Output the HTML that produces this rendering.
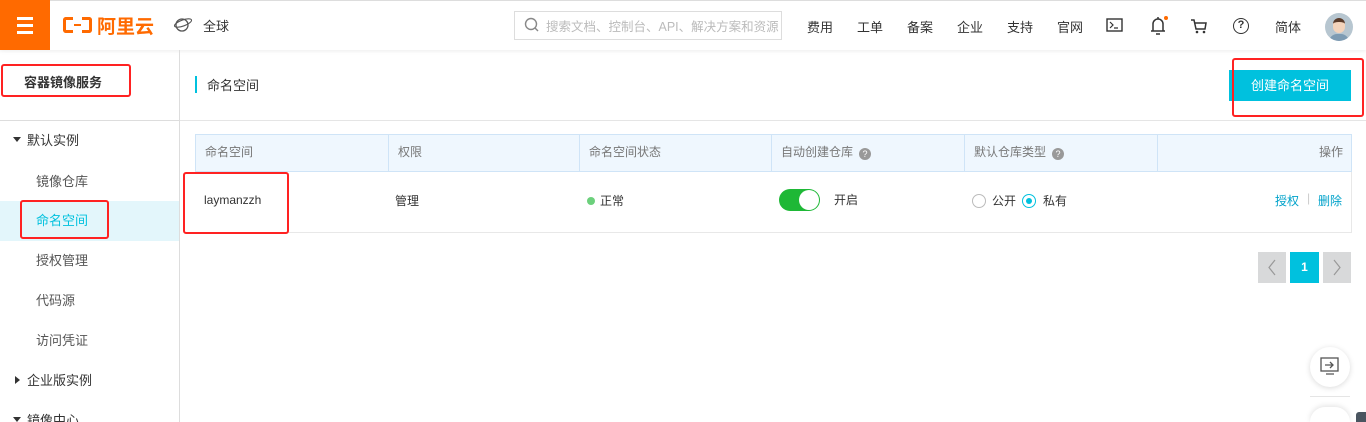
<!DOCTYPE html>
<html><head><meta charset="utf-8"><style>
*{box-sizing:border-box;margin:0;padding:0}
html{width:1366px;height:422px;overflow:hidden}
body{width:1366px;height:422px;overflow:hidden;background:#fff;font-family:"Liberation Sans","Noto Sans CJK SC",sans-serif;font-size:12px;color:#333;position:relative}
.abs{position:absolute}
.top{left:0;top:0;width:1366px;height:50px;background:#fff;box-shadow:0 1px 4px rgba(0,0,0,.08);border-top:1px solid #ddd}
.nav{top:17px;font-size:13px;color:#333}
.side{left:0;top:50px;width:180px;height:372px;border-right:1px solid #ddd}
.mi{left:36px;font-size:13px;color:#555}
.red{border:2px solid #f22;border-radius:3px}
.th{top:134px;height:38px;background:#eff7fe;border:1px solid #cfe4f7}
.cell{position:absolute;top:0;height:100%;border-right:1px solid #cfe4f7;padding-left:9px;line-height:35px;color:#777;font-size:12px}
.q{display:inline-block;width:12px;height:12px;border-radius:50%;background:#999;color:#fff;font-size:9px;line-height:12px;text-align:center;margin-left:6px;vertical-align:-1px}
</style></head><body>
<div class="abs top"></div>
<div class="abs" style="left:0;top:0;width:50px;height:50px;background:#ff6a00"></div>
<div class="abs" style="left:17px;top:17px;width:16px;height:3px;background:#fff"></div>
<div class="abs" style="left:17px;top:24px;width:16px;height:3px;background:#fff"></div>
<div class="abs" style="left:17px;top:31px;width:16px;height:3px;background:#fff"></div>
<div class="abs" style="left:63px;top:17px;width:10px;height:16px;border:3px solid #ff6a00;border-right:none;border-radius:3px 0 0 3px"></div>
<div class="abs" style="left:82px;top:17px;width:10px;height:16px;border:3px solid #ff6a00;border-left:none;border-radius:0 3px 3px 0"></div>
<div class="abs" style="left:74px;top:24px;width:7px;height:2px;background:#ff6a00"></div>
<div class="abs" style="left:97px;top:12px;font-size:19px;font-weight:bold;color:#ff6a00">阿里云</div>
<svg class="abs" style="left:173px;top:16px" width="20" height="18" viewBox="0 0 20 18"><circle cx="9" cy="9" r="6" fill="none" stroke="#555" stroke-width="1.3"/><ellipse cx="10" cy="7" rx="9" ry="3" fill="none" stroke="#555" stroke-width="1.1" transform="rotate(-20 10 7)"/></svg>
<div class="abs nav" style="left:203px;top:16px">全球</div>
<div class="abs" style="left:514px;top:11px;width:268px;height:29px;border:1px solid #ddd"></div>
<svg class="abs" style="left:524px;top:17px" width="16" height="16"><circle cx="7" cy="7" r="5.5" fill="none" stroke="#888" stroke-width="1.4"/><line x1="11" y1="11" x2="14" y2="14" stroke="#888" stroke-width="1.4"/></svg>
<div class="abs" style="left:546px;top:16px;font-size:12.5px;color:#bbb;white-space:nowrap">搜索文档、控制台、API、解决方案和资源</div>
<div class="abs nav" style="left:807px">费用</div>
<div class="abs nav" style="left:857px">工单</div>
<div class="abs nav" style="left:907px">备案</div>
<div class="abs nav" style="left:957px">企业</div>
<div class="abs nav" style="left:1007px">支持</div>
<div class="abs nav" style="left:1057px">官网</div>
<svg class="abs" style="left:1106px;top:18px" width="18" height="15"><rect x="1" y="1" width="15" height="12" fill="none" stroke="#333" stroke-width="1.4"/><path d="M4 4l3 3-3 3M8 10h4" fill="none" stroke="#333" stroke-width="1.2"/></svg>
<svg class="abs" style="left:1149px;top:14px" width="20" height="22"><path d="M4 17V10a5 5 0 0 1 10 0v7M2 17h14M7 20h4M9 3v2" fill="none" stroke="#333" stroke-width="1.5"/><circle cx="17" cy="4" r="2" fill="#ff6a00"/></svg>
<svg class="abs" style="left:1190px;top:18px" width="18" height="16"><path d="M1 2h3l2 9h9l1-6H5" fill="none" stroke="#333" stroke-width="1.5"/><circle cx="7" cy="14" r="1.3" fill="#333"/><circle cx="14" cy="14" r="1.3" fill="#333"/></svg>
<div class="abs" style="left:1233px;top:18px;width:16px;height:16px;border:1.6px solid #333;border-radius:50%;text-align:center;font-size:11px;font-weight:bold;line-height:13px">?</div>
<div class="abs nav" style="left:1275px">简体</div>
<div class="abs" style="left:1325px;top:13px;width:28px;height:28px;border-radius:50%;background:#b7c6d0;overflow:hidden"><div class="abs" style="left:8px;top:5px;width:12px;height:15px;border-radius:6px;background:#f3d3bb;border-top:4px solid #5a3b2a"></div><div class="abs" style="left:4px;top:21px;width:20px;height:10px;border-radius:8px 8px 0 0;background:#7d9bb3"></div></div>

<div class="abs side"></div>
<div class="abs" style="left:0;top:120px;width:180px;height:1px;background:#ddd"></div>
<div class="abs" style="left:24px;top:72px;font-size:13px;font-weight:bold;color:#333">容器镜像服务</div>
<div class="abs red" style="left:1px;top:64px;width:130px;height:33px"></div>
<div class="abs" style="left:13px;top:137px;border:4px solid transparent;border-top:5px solid #333"></div>
<div class="abs" style="left:27px;top:130px;font-size:13px;color:#333">默认实例</div>
<div class="abs mi" style="top:171px">镜像仓库</div>
<div class="abs" style="left:0;top:201px;width:179px;height:40px;background:#e3f6fb"></div>
<div class="abs mi" style="top:210px;color:#00c1de">命名空间</div>
<div class="abs red" style="left:20px;top:200px;width:89px;height:39px"></div>
<div class="abs mi" style="top:250px">授权管理</div>
<div class="abs mi" style="top:290px">代码源</div>
<div class="abs mi" style="top:330px">访问凭证</div>
<div class="abs" style="left:15px;top:376px;border:4px solid transparent;border-left:5px solid #333"></div>
<div class="abs" style="left:27px;top:370px;font-size:13px;color:#333">企业版实例</div>
<div class="abs" style="left:13px;top:417px;border:4px solid transparent;border-top:5px solid #333"></div>
<div class="abs" style="left:27px;top:410px;font-size:13px;color:#333">镜像中心</div>

<div class="abs" style="left:180px;top:120px;width:1186px;height:1px;background:#e5e5e5"></div>
<div class="abs" style="left:195px;top:76px;width:2px;height:17px;background:#00c1de"></div>
<div class="abs" style="left:207px;top:75px;font-size:13px;color:#333">命名空间</div>
<div class="abs" style="left:1229px;top:70px;width:122px;height:31px;background:#00c1de;color:#fff;font-size:13px;text-align:center;line-height:31px">创建命名空间</div>
<div class="abs red" style="left:1232px;top:58px;width:132px;height:59px"></div>

<div class="abs th" style="left:195px;width:1157px">
<div class="cell" style="left:0;width:193px">命名空间</div>
<div class="cell" style="left:193px;width:191px">权限</div>
<div class="cell" style="left:384px;width:192px">命名空间状态</div>
<div class="cell" style="left:576px;width:193px">自动创建仓库<span class="q">?</span></div>
<div class="cell" style="left:769px;width:193px">默认仓库类型<span class="q">?</span></div>
<div class="cell" style="left:962px;width:193px;border:none;text-align:right;padding-right:8px">操作</div>
</div>
<div class="abs" style="left:195px;top:232px;width:1157px;height:1px;background:#e8e8e8"></div>
<div class="abs" style="left:1351px;top:172px;width:1px;height:60px;background:#e8e8e8"></div>
<div class="abs" style="left:204px;top:193px;font-size:12px;color:#333">laymanzzh</div>
<div class="abs red" style="left:183px;top:172px;width:106px;height:62px"></div>
<div class="abs" style="left:395px;top:192px;font-size:12px;color:#333">管理</div>
<div class="abs" style="left:587px;top:197px;width:8px;height:8px;border-radius:50%;background:#6cd07c"></div>
<div class="abs" style="left:600px;top:192px;font-size:12px;color:#333">正常</div>
<div class="abs" style="left:779px;top:189px;width:41px;height:22px;border-radius:11px;background:#1eb836"></div>
<div class="abs" style="left:799px;top:190px;width:20px;height:20px;border-radius:50%;background:#fff"></div>
<div class="abs" style="left:834px;top:191px;font-size:12px;color:#333">开启</div>
<div class="abs" style="left:972px;top:194px;width:14px;height:14px;border-radius:50%;border:1px solid #bbb"></div>
<div class="abs" style="left:992px;top:192px;font-size:12px;color:#333">公开</div>
<div class="abs" style="left:1022px;top:194px;width:14px;height:14px;border-radius:50%;border:1px solid #00c1de"></div>
<div class="abs" style="left:1026px;top:198px;width:6px;height:6px;border-radius:50%;background:#00c1de"></div>
<div class="abs" style="left:1043px;top:192px;font-size:12px;color:#333">私有</div>
<div class="abs" style="left:1275px;top:192px;font-size:12px;color:#00a2ca">授权</div>
<div class="abs" style="left:1307px;top:191px;font-size:12px;color:#ccc">|</div>
<div class="abs" style="left:1318px;top:192px;font-size:12px;color:#00a2ca">删除</div>

<div class="abs" style="left:1258px;top:252px;width:28px;height:31px;background:#d8d9da"></div>
<svg class="abs" style="left:1258px;top:252px" width="28" height="31"><path d="M17 8l-6 7.5 6 7.5" fill="none" stroke="#999" stroke-width="1.2"/></svg>
<div class="abs" style="left:1290px;top:252px;width:29px;height:31px;background:#00c1de;color:#fff;font-weight:bold;text-align:center;line-height:31px">1</div>
<div class="abs" style="left:1323px;top:252px;width:28px;height:31px;background:#d8d9da"></div>
<svg class="abs" style="left:1323px;top:252px" width="28" height="31"><path d="M11 8l6 7.5-6 7.5" fill="none" stroke="#999" stroke-width="1.2"/></svg>

<div class="abs" style="left:1310px;top:347px;width:40px;height:40px;border-radius:50%;background:#fff;box-shadow:0 1px 6px rgba(0,0,0,.15)"></div>
<svg class="abs" style="left:1320px;top:357px" width="20" height="20"><rect x="1" y="1" width="17" height="13" fill="none" stroke="#555" stroke-width="1.3"/><path d="M5 8h8M10 5l3 3-3 3M6 17h8" fill="none" stroke="#555" stroke-width="1.3"/></svg>
<div class="abs" style="left:1310px;top:396px;width:40px;height:1px;background:#e5e5e5"></div>
<div class="abs" style="left:1310px;top:407px;width:40px;height:15px;border-radius:20px 20px 0 0;background:#fff;box-shadow:0 -1px 6px rgba(0,0,0,.12)"></div>
<div class="abs" style="left:1356px;top:412px;width:10px;height:10px;border-radius:3px 0 0 0;background:#4a5560"></div>
</body></html>
